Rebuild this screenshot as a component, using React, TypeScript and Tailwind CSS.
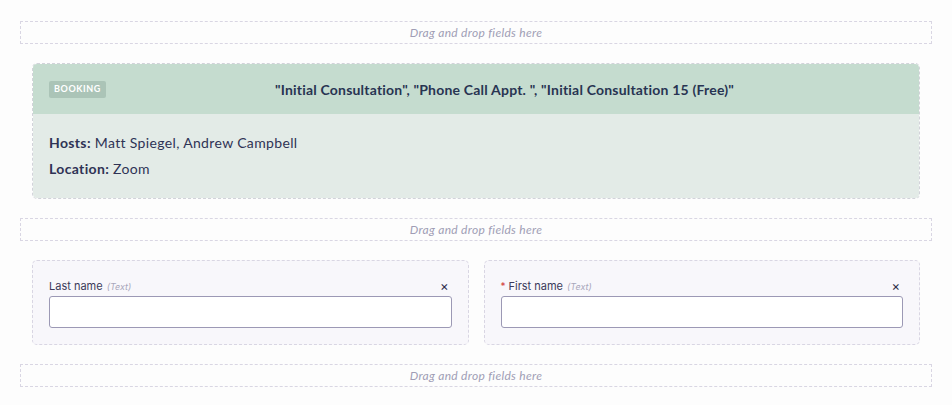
import React from "react";

function DropZone() {
  return (
    <div className="h-[23px] border border-dashed border-[#d9d6e3] flex items-center justify-center">
      <span className="text-[12px] italic text-[#a09db5] tracking-[0.3px]" style={{ fontFamily: "Lato, sans-serif" }}>
        Drag and drop fields here
      </span>
    </div>
  );
}

function Field({ label, required }: { label: string; required?: boolean }) {
  return (
    <div className="flex-1 rounded-[5px] border border-dashed border-[#d9d6e3] bg-[#f8f7fb] px-[16px] pt-[17px] pb-[16px]">
      <div className="flex items-center justify-between h-[16px] mb-[2px]">
        <div className="flex items-baseline text-[11px] text-[#3b3a5a]" style={{ fontFamily: "Inter, sans-serif" }}>
          {required && <span className="text-[#d23c3c] mr-[3px] text-[10px]">*</span>}
          <span>{label}</span>
          <span className="italic text-[#a9a7bb] text-[9px] ml-[4px]">(Text)</span>
        </div>
        <span className="text-[13px] text-[#2f2e4a] leading-none mr-[3px]" style={{ fontFamily: "Inter, sans-serif" }}>×</span>
      </div>
      <div className="h-[32px] rounded-[3px] border border-[#9c99b5] bg-white" />
    </div>
  );
}

export default function App() {
  return (
    <div className="w-[952px] h-[405px] bg-[#fdfdfd] px-[20px] pt-[21px] overflow-hidden">
      <DropZone />
      <div className="px-[12px] pt-[19px] pb-[19px]">
        <div className="rounded-[5px] border border-dashed border-[#d2d3da] overflow-hidden" style={{ fontFamily: "Lato, sans-serif" }}>
          <div className="h-[50px] bg-[#c5dccf] flex items-center pl-[16px] pr-[16px]">
            <span className="bg-[#abc4b7] text-white text-[9px] font-bold tracking-[0.6px] px-[5px] h-[17px] flex items-center rounded-[2px]">
              BOOKING
            </span>
            <div className="flex-1 text-center text-[14px] font-bold text-[#283452] tracking-[0.2px]">
              "Initial Consultation", "Phone Call Appt. ", "Initial Consultation 15 (Free)"
            </div>
          </div>
          <div className="bg-[#e3ebe7] px-[16px] pt-[19px] pb-[19px] text-[14px] text-[#2f3355] tracking-[0.35px]">
            <div className="leading-[20px] mb-[6px]">
              <span className="font-bold">Hosts:</span> Matt Spiegel, Andrew Campbell
            </div>
            <div className="leading-[20px]">
              <span className="font-bold">Location:</span> Zoom
            </div>
          </div>
        </div>
      </div>
      <DropZone />
      <div className="px-[12px] py-[19px] flex gap-[15px]">
        <Field label="Last name" />
        <Field label="First name" required />
      </div>
      <DropZone />
    </div>
  );
}
